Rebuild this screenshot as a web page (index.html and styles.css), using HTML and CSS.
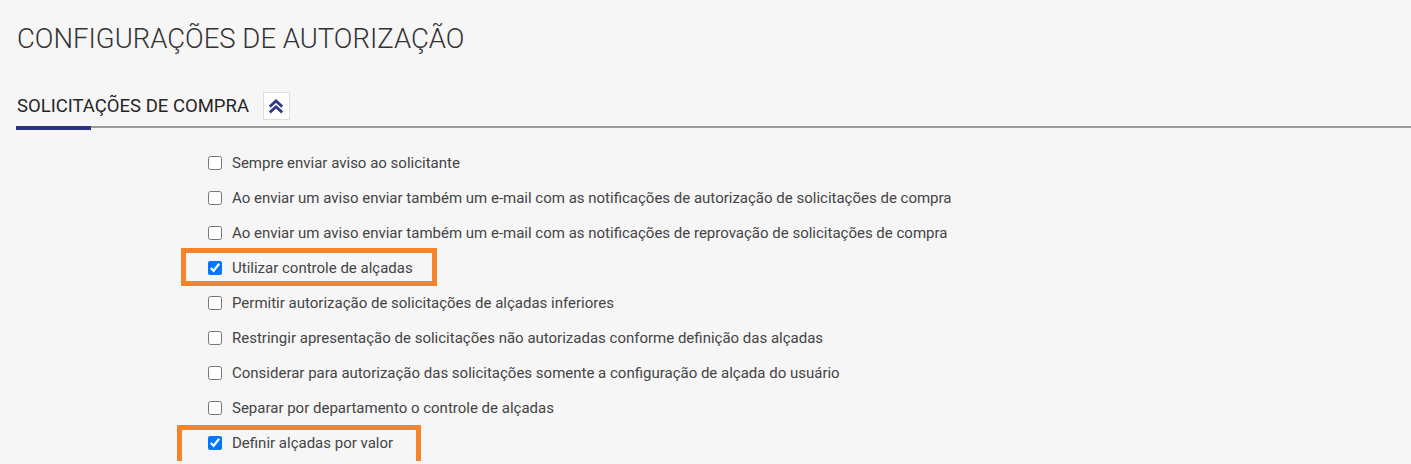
FILE: index.html
```html
<!DOCTYPE html>
<html lang="pt-BR">
<head>
<meta charset="utf-8">
<title>Configurações de autorização</title>
<link rel="stylesheet" href="styles.css">
</head>
<body>
<main class="page">
  <h1 class="page-title">CONFIGURAÇÕES DE AUTORIZAÇÃO</h1>
  <section class="section">
    <div class="section-head">
      <h2 class="section-title">SOLICITAÇÕES DE COMPRA</h2>
      <button class="collapse-btn" type="button" aria-label="Recolher">
        <svg width="16" height="15" viewBox="0 0 16 15" aria-hidden="true">
          <path d="M1.8 7.6 L8 2 L14.2 7.6" fill="none" stroke="#2f3a8f" stroke-width="2.8" stroke-linejoin="miter"/>
          <path d="M1.8 13.4 L8 7.8 L14.2 13.4" fill="none" stroke="#2f3a8f" stroke-width="2.8" stroke-linejoin="miter"/>
        </svg>
      </button>
    </div>
    <ul class="options">
      <li class="option"><input type="checkbox" id="o1"><label for="o1">Sempre enviar aviso ao solicitante</label></li>
      <li class="option"><input type="checkbox" id="o2"><label for="o2">Ao enviar um aviso enviar também um e-mail com as notificações de autorização de solicitações de compra</label></li>
      <li class="option"><input type="checkbox" id="o3"><label for="o3">Ao enviar um aviso enviar também um e-mail com as notificações de reprovação de solicitações de compra</label></li>
      <li class="option"><span class="highlight hl-1"></span><input type="checkbox" id="o4" checked><label for="o4">Utilizar controle de alçadas</label></li>
      <li class="option"><input type="checkbox" id="o5"><label for="o5">Permitir autorização de solicitações de alçadas inferiores</label></li>
      <li class="option"><input type="checkbox" id="o6"><label for="o6">Restringir apresentação de solicitações não autorizadas conforme definição das alçadas</label></li>
      <li class="option"><input type="checkbox" id="o7"><label for="o7">Considerar para autorização das solicitações somente a configuração de alçada do usuário</label></li>
      <li class="option"><input type="checkbox" id="o8"><label for="o8">Separar por departamento o controle de alçadas</label></li>
      <li class="option"><span class="highlight hl-2"></span><input type="checkbox" id="o9" checked><label for="o9">Definir alçadas por valor</label></li>
    </ul>
  </section>
</main>
</body>
</html>
```

FILE: styles.css
```css
* { box-sizing: border-box; }
html, body {
  margin: 0;
  padding: 0;
  background: #f6f6f6;
  font-family: Roboto, "Liberation Sans", Arial, sans-serif;
  color: #444;
  overflow: hidden;
}
.page {
  padding: 22px 0 0 16px;
}
.page-title {
  margin: 0 0 0 1px;
  font-size: 27.5px;
  font-weight: 300;
  line-height: 33px;
  color: #333;
  letter-spacing: 0;
}
.section {
  margin-top: 37px;
}
.section-head {
  display: flex;
  align-items: flex-start;
  gap: 14px;
  height: 36px;
  border-bottom: 2px solid #9a9a9a;
  position: relative;
}
.section-head::after {
  content: "";
  position: absolute;
  left: 0;
  bottom: -4px;
  width: 75px;
  height: 4px;
  background: #2b3183;
}
.section-title {
  margin: 0 0 0 1px;
  font-size: 18.5px;
  font-weight: 400;
  color: #262626;
  line-height: 21px;
  padding-top: 4px;
}
.collapse-btn {
  width: 27px;
  height: 28px;
  padding: 0;
  background: #fff;
  border: 1px solid #dedede;
  display: flex;
  align-items: center;
  justify-content: center;
  cursor: pointer;
}
.options {
  list-style: none;
  margin: 17px 0 0 0;
  padding: 0 0 0 192px;
}
.option {
  position: relative;
  display: flex;
  align-items: center;
  gap: 10px;
  height: 35.1px;
  font-size: 15px;
  color: #444;
}
.option input {
  width: 14px;
  height: 14px;
  margin: 0;
  accent-color: #0075ff;
}
.highlight {
  position: absolute;
  border: 5px solid #f7842a;
  pointer-events: none;
}
.hl-1 {
  left: -27px;
  top: -2px;
  width: 256px;
  height: 38px;
}
.hl-2 {
  left: -31px;
  top: -1px;
  width: 244px;
  height: 41px;
}
```
